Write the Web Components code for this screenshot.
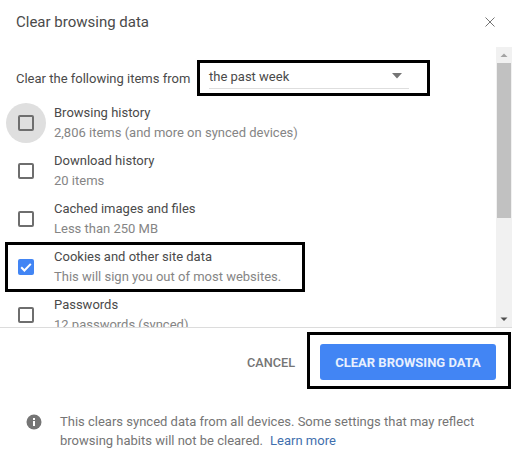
<!DOCTYPE html>
<html>
<head>
<meta charset="utf-8">
<title>Clear browsing data</title>
<style>
    html, body { margin: 0; padding: 0; background: #fff; }
</style>
</head>
<body>
<clear-dialog>
    <span slot="title">Clear browsing data</span>
    <time-range slot="range" label="Clear the following items from" value="the past week"></time-range>
    <data-row slot="rows" halo title-text="Browsing history" sub="2,806 items (and more on synced devices)"></data-row>
    <data-row slot="rows" title-text="Download history" sub="20 items"></data-row>
    <data-row slot="rows" title-text="Cached images and files" sub="Less than 250 MB"></data-row>
    <data-row slot="rows" checked title-text="Cookies and other site data" sub="This will sign you out of most websites."></data-row>
    <data-row slot="rows" title-text="Passwords" sub="12 passwords (synced)"></data-row>
</clear-dialog>
<script>
const dialogTemplate = document.createElement('template');
dialogTemplate.innerHTML = `
    <style>
        :host {
            display: flex;
            flex-direction: column;
            position: relative;
            width: 512px;
            height: 466px;
            overflow: hidden;
            background: #fff;
            font-family: Roboto, "Liberation Sans", sans-serif;
            color: #333;
        }
        header {
            display: flex;
            justify-content: space-between;
            align-items: center;
            height: 47px;
            padding: 0 17px 4px 16px;
            box-sizing: border-box;
            font-size: 15px;
            color: #4a4a4a;
        }
        .close { width: 10px; height: 10px; display: block; }
        .middle {
            display: flex;
            height: 280px;
            border-bottom: 1px solid #dcdcdc;
        }
        .scroll {
            flex: 1;
            overflow: hidden;
        }
        .rows { display: flex; flex-direction: column; }
        .bar {
            width: 16px;
            background: #f1f1f1;
            display: flex;
            flex-direction: column;
            align-items: center;
            justify-content: space-between;
            position: relative;
        }
        .arrow { width: 16px; height: 16px; display: block; flex: none; }
        .thumb {
            position: absolute;
            top: 16px;
            left: 1px;
            width: 14px;
            height: 155px;
            background: #c1c1c1;
        }
        .actions {
            display: flex;
            justify-content: flex-end;
            align-items: center;
            gap: 25px;
            padding: 16px 16px 0 0;
            height: 36px;
        }
        .cancel {
            font-size: 12.7px;
            font-weight: 500;
            color: #757575;
        }
        .clear {
            width: 176px;
            height: 36px;
            display: flex;
            align-items: center;
            justify-content: center;
            background: #4285f4;
            border-radius: 3px;
            color: #e8f0fe;
            font-size: 13px;
            font-weight: 700;
        }
        footer {
            display: flex;
            align-items: flex-start;
            padding: 32px 30px 0 26px;
            font-size: 13px;
            line-height: 19px;
            color: #757575;
        }
        footer svg { width: 16px; height: 16px; flex: none; margin: 2px 18px 0 0; }
        .line { white-space: nowrap; }
        a { color: #3f6fae; text-decoration: none; margin-left: 7px; }
        .mark {
            position: absolute;
            box-sizing: border-box;
            border: 3px solid #000;
        }
    </style>
    <header>
        <slot name="title"></slot>
        <svg class="close" viewBox="0 0 10 10"><path d="M.5.5l9 9M9.5.5l-9 9" stroke="#757575" stroke-width="1" fill="none"/></svg>
    </header>
    <div class="middle">
        <div class="scroll">
            <slot name="range"></slot>
            <div class="rows"><slot name="rows"></slot></div>
        </div>
        <div class="bar">
            <svg class="arrow" viewBox="0 0 16 16"><path d="M4.500 10L8 6.500 11.500 10z" fill="#a3a3a3"/></svg>
            <div class="thumb"></div>
            <svg class="arrow" viewBox="0 0 16 16"><path d="M4.500 6.500L8 10l3.500-3.500z" fill="#505050"/></svg>
        </div>
    </div>
    <div class="actions">
        <span class="cancel">CANCEL</span>
        <span class="clear">CLEAR BROWSING DATA</span>
    </div>
    <footer>
        <svg viewBox="0 0 16 16"><circle cx="8" cy="8" r="7.500" fill="#757575"/><rect x="7" y="7" width="2" height="5" fill="#fff"/><rect x="7" y="4" width="2" height="2" fill="#fff"/></svg>
        <div>
            <div class="line">This clears synced data from all devices. Some settings that may reflect</div>
            <div class="line"><span>browsing habits will not be cleared.</span><a>Learn more</a></div>
        </div>
    </footer>
    <div class="mark" style="left:197px;top:60px;width:233px;height:36px"></div>
    <div class="mark" style="left:5px;top:242px;width:300px;height:50px"></div>
    <div class="mark" style="left:307px;top:332px;width:204px;height:57px"></div>
`;
class ClearDialog extends HTMLElement {
    constructor() {
        super();
        this.attachShadow({ mode: 'open' });
        this.shadowRoot.appendChild(dialogTemplate.content.cloneNode(true));
    }
}
customElements.define('clear-dialog', ClearDialog);

class TimeRange extends HTMLElement {
    constructor() {
        super();
        this.attachShadow({ mode: 'open' });
    }
    connectedCallback() {
        this.shadowRoot.innerHTML = `
            <style>
                :host {
                    display: flex;
                    align-items: center;
                    height: 43px;
                    padding: 9px 0 0 16px;
                    box-sizing: content-box;
                    font-size: 13px;
                    color: #4a4a4a;
                }
                .label { width: 193px; flex: none; margin-top: 2px; }
                .select {
                    width: 200px;
                    height: 25px;
                    box-sizing: border-box;
                    display: flex;
                    justify-content: space-between;
                    align-items: center;
                    border-bottom: 1px solid #dedede;
                    margin-top: -2px;
                }
                svg { width: 10px; height: 6px; margin-right: 7px; }
            </style>
            <span class="label">${this.getAttribute('label')}</span>
            <div class="select">
                <span>${this.getAttribute('value')}</span>
                <svg viewBox="0 0 10 6"><path d="M0 0h10L5 5.500z" fill="#757575"/></svg>
            </div>`;
    }
}
customElements.define('time-range', TimeRange);

class DataRow extends HTMLElement {
    constructor() {
        super();
        this.attachShadow({ mode: 'open' });
    }
    connectedCallback() {
        const checked = this.hasAttribute('checked');
        const box = checked
            ? `<svg viewBox="0 0 16 16"><rect width="16" height="16" rx="2" fill="#4285f4"/><path d="M3.200 8.300l3.200 3.200 6.400-6.600" fill="none" stroke="#fff" stroke-width="2"/></svg>`
            : `<svg viewBox="0 0 16 16"><rect x="1" y="1" width="14" height="14" rx="1" fill="none" stroke="#6e6e6e" stroke-width="2"/></svg>`;
        this.shadowRoot.innerHTML = `
            <style>
                :host {
                    display: flex;
                    align-items: center;
                    height: 48px;
                    flex: none;
                    font-size: 13px;
                    line-height: 19px;
                }
                .check {
                    width: 40px;
                    height: 40px;
                    margin: 0 8px 0 6px;
                    border-radius: 50%;
                    display: flex;
                    align-items: center;
                    justify-content: center;
                    flex: none;
                }
                :host([halo]) .check { background: #dfdfdf; }
                svg { width: 16px; height: 16px; }
                .text { padding-bottom: 1px; }
                .title { color: #4a4a4a; }
                .sub { color: #858585; margin-top: 1px; }
            </style>
            <div class="check">${box}</div>
            <div class="text">
                <div class="title">${this.getAttribute('title-text')}</div>
                <div class="sub">${this.getAttribute('sub')}</div>
            </div>`;
    }
}
customElements.define('data-row', DataRow);
</script>
</body>
</html>
